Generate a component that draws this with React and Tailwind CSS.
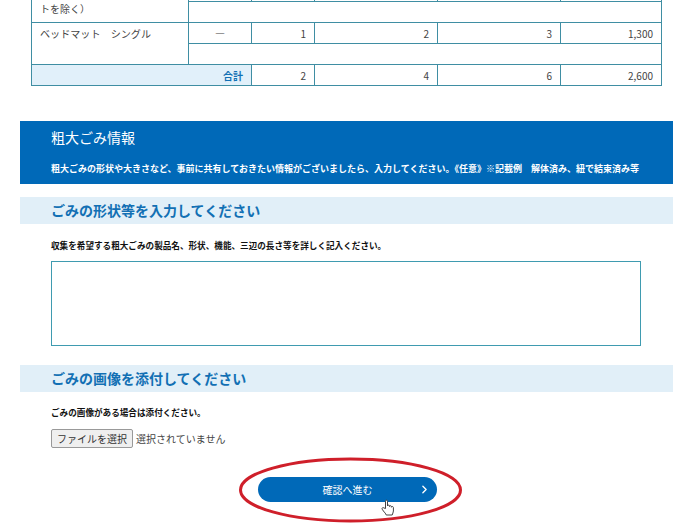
import React from 'react';
import { ChevronRight } from 'lucide-react';

const cellLine = 'border border-[#3f8ea3]';

const QuantityRow = ({ name, values }) => (
    <>
        <tr className="h-[21px]">
            <td rowSpan={2} className={`${cellLine} px-2 align-top pt-[3px] text-[10.1px] text-[#444]`}>{name}</td>
            <td className={`${cellLine} text-center text-[#444]`}>{values[0]}</td>
            {values.slice(1).map((v, i) => (
                <td key={i} className={`${cellLine} text-right pr-2 text-[#444]`}>{v}</td>
            ))}
        </tr>
        <tr className="h-[21px]">
            <td colSpan={5} className={cellLine}></td>
        </tr>
    </>
);

const SectionHeading = ({ children }) => (
    <h3 className="h-[27px] bg-[#e1eff8] pl-[31px] text-[14px] leading-[27px] font-bold text-[#1270b4]">{children}</h3>
);

const App = () => {
    return (
        <div className="relative h-[530px] w-[700px] overflow-hidden bg-white font-['Noto_Sans_CJK_JP','Noto_Sans',sans-serif]">
            {/* Table, cut off by the top of the screen */}
            <div className="ml-[31px] -mt-[20px] w-[631px]">
                <table className="w-[631px] table-fixed border-collapse text-[10px] font-['Noto_Sans_CJK_JP','Noto_Sans',sans-serif]">
                    <colgroup>
                        <col className="w-[157px]" />
                        <col className="w-[63px]" />
                        <col className="w-[63px]" />
                        <col className="w-[123px]" />
                        <col className="w-[123px]" />
                        <col className="w-[101px]" />
                    </colgroup>
                    <tbody>
                        <tr className="h-[21px]">
                            <td rowSpan={2} className={`${cellLine} px-2 align-bottom pb-[6px] text-[#444]`}>トを除く）</td>
                            <td className={cellLine}></td>
                            <td className={cellLine}></td>
                            <td className={cellLine}></td>
                            <td className={cellLine}></td>
                            <td className={cellLine}></td>
                        </tr>
                        <tr className="h-[21px]">
                            <td colSpan={5} className={cellLine}></td>
                        </tr>
                        <QuantityRow name="ベッドマット　シングル" values={['―', '1', '2', '3', '1,300']} />
                        <tr className="h-[21px]">
                            <td colSpan={2} className={`${cellLine} bg-[#e1f0fa] pr-2 text-right font-bold text-[#1270b4]`}>合計</td>
                            <td className={`${cellLine} pr-2 text-right text-[#444]`}>2</td>
                            <td className={`${cellLine} pr-2 text-right text-[#444]`}>4</td>
                            <td className={`${cellLine} pr-2 text-right text-[#444]`}>6</td>
                            <td className={`${cellLine} pr-2 text-right text-[#444]`}>2,600</td>
                        </tr>
                    </tbody>
                </table>
            </div>

            <div className="ml-[20px] mt-[35px] w-[653px]">
                <div className="h-[63px] bg-[#0069b8] pl-[31px] text-white">
                    <h2 className="pt-[6px] text-[14px] leading-[20px]">粗大ごみ情報</h2>
                    <p className="mt-[15px] text-[9px] leading-[13px] font-bold whitespace-nowrap">
                        粗大ごみの形状や大きさなど、事前に共有しておきたい情報がございましたら、入力してください。《任意》※記載例　解体済み、紐で結束済み等
                    </p>
                </div>

                <div className="mt-[13px]">
                    <SectionHeading>ごみの形状等を入力してください</SectionHeading>
                </div>
                <p className="mt-[15px] pl-[31px] text-[8.6px] leading-[13px] font-bold whitespace-nowrap text-[#111]">
                    収集を希望する粗大ごみの製品名、形状、機能、三辺の長さ等を詳しく記入ください。
                </p>
                <div className="mt-[9px] ml-[31px] h-[85px] w-[590px] border border-[#3f9bb0] bg-white"></div>

                <div className="mt-[19px]">
                    <SectionHeading>ごみの画像を添付してください</SectionHeading>
                </div>
                <p className="mt-[14px] pl-[31px] text-[8.6px] leading-[13px] font-bold text-[#111]">
                    ごみの画像がある場合は添付ください。
                </p>
                <div className="mt-[10px] flex items-center pl-[31px] text-[10px] text-[#444]">
                    <button className="h-[19px] w-[82px] rounded-[2px] border border-[#999] bg-[#efefef] text-center text-[#333]">
                        ファイルを選択
                    </button>
                    <span className="ml-[3px]">選択されていません</span>
                </div>

                <div className="relative mt-[29px] ml-[238px] flex h-[25px] w-[179px] items-center justify-center rounded-full bg-[#0069b8] text-[10px] text-white">
                    確認へ進む
                    <ChevronRight className="absolute right-[6px] top-[6px] h-[13px] w-[13px]" strokeWidth={2.5} />
                </div>
            </div>

            {/* Red marker ellipse drawn over the button */}
            <svg className="absolute left-[235px] top-[454px]" width="232" height="72" viewBox="0 0 232 72" fill="none">
                <ellipse cx="115.5" cy="36" rx="110" ry="31" stroke="#cf1f2a" strokeWidth="3" />
            </svg>

            {/* Hand cursor */}
            <svg className="absolute left-[381px] top-[499px]" width="14" height="17" viewBox="0 0 14 17" fill="#fff" stroke="#444" strokeWidth="1" strokeLinejoin="round">
                <path d="M4.5 9.5 V2.2 C4.5 0.8 6.5 0.8 6.5 2.2 V7 C6.5 5.8 8.5 5.8 8.5 7 V7.5 C8.5 6.4 10.4 6.4 10.4 7.6 V8.2 C10.4 7.2 12.4 7.2 12.4 8.5 V12 C12.4 13.5 11.5 14.5 11.2 16 H5.2 C4.8 14.5 3.6 13.6 2.4 12 L1.2 10.2 C0.5 9 2 8 3 9 Z" />
            </svg>
        </div>
    );
};

export default App;
